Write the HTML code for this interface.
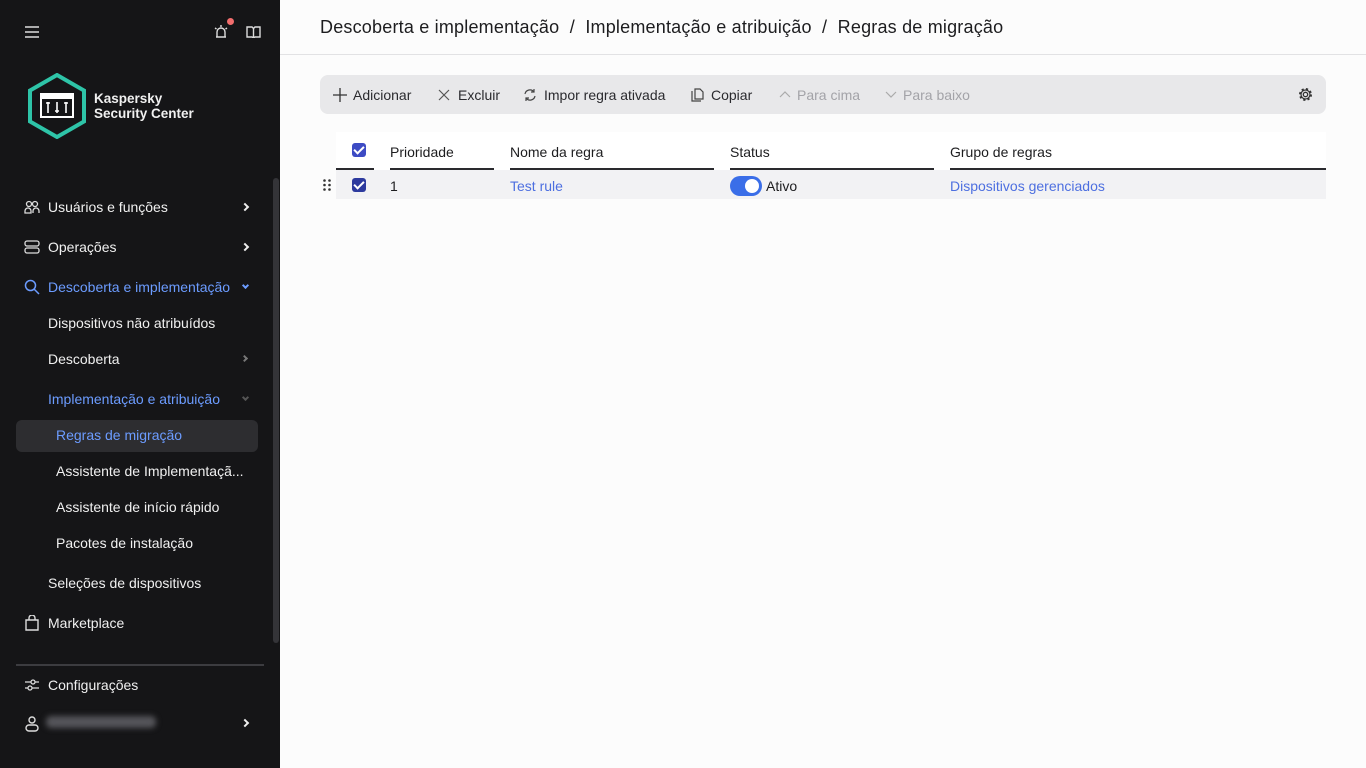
<!DOCTYPE html>
<html><head><meta charset="utf-8"><style>
*{box-sizing:border-box;margin:0;padding:0}
body{width:1366px;height:768px;overflow:hidden;font-family:"Liberation Sans",sans-serif;background:#fcfcfc;position:relative}
.sb{position:absolute;left:0;top:0;width:280px;height:768px;background:#151517;color:#f0f0f0}
.t{position:absolute;font-size:14px;white-space:nowrap}
.blue{color:#6c9cff}
.chev{position:absolute;width:6px;height:6px;border-right:2px solid #eee;border-bottom:2px solid #eee}
.main{position:absolute;left:280px;top:0;right:0;height:768px}
.h{position:absolute;top:17px;left:40px;font-size:18px;color:#1d1d1f;letter-spacing:0.2px}
.bar{position:absolute;left:40px;top:75px;width:1006px;height:39px;background:#e8e8ea;border-radius:8px}
.bt{position:absolute;top:12px;font-size:14px;color:#2a2a2e;white-space:nowrap}
.dis{color:#a3a3a8}
.th{position:absolute;top:144px;font-size:14px;color:#1d1d1f}
.ln{position:absolute;top:168px;height:2px;background:#2a2a2e}
.cb{position:absolute;width:14px;height:14px;background:#3d4bc4;border-radius:3px}
.cb:after{content:"";position:absolute;left:4px;top:1px;width:4px;height:8px;border-right:2px solid #fff;border-bottom:2px solid #fff;transform:rotate(45deg)}
</style></head><body>
<div class="sb">
 <svg style="position:absolute;left:25px;top:26px" width="14" height="12"><path d="M0 1h14M0 6h14M0 11h14" stroke="#ddd" stroke-width="1.6"/></svg>
 <svg style="position:absolute;left:213px;top:24px" width="16" height="16"><path d="M3 13h10M4 13V8a4 4 0 0 1 8 0v5M8 1v2M2 4l1.5 1M14 4l-1.5 1" stroke="#ddd" stroke-width="1.4" fill="none"/></svg>
 <div style="position:absolute;left:227px;top:18px;width:7px;height:7px;border-radius:50%;background:#f26d6d"></div>
 <svg style="position:absolute;left:246px;top:26px" width="15" height="12"><path d="M1 1h5l1.5 1.5L9 1h5v10H9l-1.5 1L6 11H1zM7.5 2.5V11" stroke="#ddd" stroke-width="1.4" fill="none"/></svg>
 <svg style="position:absolute;left:26px;top:73px" width="62" height="66"><path d="M31 2L58 17.5V48.5L31 64L4 48.5V17.5Z" fill="none" stroke="#2ec4a8" stroke-width="4"/><rect x="14" y="20" width="34" height="25" fill="#fff"/><rect x="16" y="26" width="30" height="17" fill="#151517"/><path d="M22 29v11M31 29v11M40 29v11M20 30h4M29 38h4M38 30h4" stroke="#fff" stroke-width="1.6"/></svg>
 <div class="t" style="left:94px;top:91px;font-weight:bold;font-size:13.5px;line-height:15px">Kaspersky<br>Security Center</div>
 <div style="position:absolute;left:273px;top:178px;width:6px;height:465px;background:#343438;border-radius:3px"></div>
 <svg style="position:absolute;left:24px;top:200px" width="16" height="14"><circle cx="5" cy="4" r="2.5" stroke="#ddd" fill="none" stroke-width="1.3"/><circle cx="11" cy="4" r="2.5" stroke="#ddd" fill="none" stroke-width="1.3"/><path d="M1 13v-2a3 3 0 0 1 6 0v2zM9 13v-2a3 3 0 0 1 6 0v2" stroke="#ddd" fill="none" stroke-width="1.3"/></svg>
 <div class="t" style="left:48px;top:199px">Usuários e funções</div><div class="chev" style="left:242px;top:204px;transform:rotate(-45deg)"></div>
 <svg style="position:absolute;left:24px;top:240px" width="16" height="14"><rect x="1" y="1" width="14" height="5" rx="2" stroke="#ddd" fill="none" stroke-width="1.3"/><rect x="1" y="8" width="14" height="5" rx="2" stroke="#ddd" fill="none" stroke-width="1.3"/></svg>
 <div class="t" style="left:48px;top:239px">Operações</div><div class="chev" style="left:242px;top:244px;transform:rotate(-45deg)"></div>
 <svg style="position:absolute;left:24px;top:279px" width="16" height="16"><circle cx="6.5" cy="6.5" r="5" stroke="#6c9cff" fill="none" stroke-width="1.5"/><path d="M10 10l5 5" stroke="#6c9cff" stroke-width="1.5"/></svg>
 <div class="t blue" style="left:48px;top:279px">Descoberta e implementação</div><div class="chev" style="left:243px;top:283px;transform:rotate(45deg);border-color:#6c9cff;width:5px;height:5px"></div>
 <div class="t" style="left:48px;top:315px">Dispositivos não atribuídos</div>
 <div class="t" style="left:48px;top:351px">Descoberta</div><div class="chev" style="left:242px;top:356px;transform:rotate(-45deg);border-color:#777;width:5px;height:5px"></div>
 <div class="t blue" style="left:48px;top:391px">Implementação e atribuição</div><div class="chev" style="left:243px;top:395px;transform:rotate(45deg);border-color:#555;width:5px;height:5px"></div>
 <div style="position:absolute;left:16px;top:420px;width:242px;height:32px;background:#2d2d30;border-radius:6px"></div>
 <div class="t blue" style="left:56px;top:427px">Regras de migração</div>
 <div class="t" style="left:56px;top:463px">Assistente de Implementaçã...</div>
 <div class="t" style="left:56px;top:499px">Assistente de início rápido</div>
 <div class="t" style="left:56px;top:535px">Pacotes de instalação</div>
 <div class="t" style="left:48px;top:575px">Seleções de dispositivos</div>
 <svg style="position:absolute;left:25px;top:615px" width="14" height="16"><path d="M1 5h12v10H1zM4 5V3a3 3 0 0 1 6 0v2" stroke="#ddd" fill="none" stroke-width="1.4"/></svg>
 <div class="t" style="left:48px;top:615px">Marketplace</div>
 <div style="position:absolute;left:16px;top:664px;width:248px;height:2px;background:#3c3c40"></div>
 <svg style="position:absolute;left:24px;top:678px" width="16" height="14"><path d="M1 4h14M1 10h14" stroke="#ddd" stroke-width="1.3"/><circle cx="9" cy="4" r="2" fill="#151517" stroke="#ddd" stroke-width="1.3"/><circle cx="6" cy="10" r="2" fill="#151517" stroke="#ddd" stroke-width="1.3"/></svg>
 <div class="t" style="left:48px;top:677px">Configurações</div>
 <svg style="position:absolute;left:25px;top:716px" width="14" height="16"><circle cx="7" cy="4" r="3" stroke="#ddd" fill="none" stroke-width="1.4"/><rect x="1" y="9" width="12" height="6" rx="3" stroke="#ddd" fill="none" stroke-width="1.4"/></svg>
 <div style="position:absolute;left:46px;top:716px;width:110px;height:12px;background:#55555a;border-radius:5px;filter:blur(3px)"></div>
 <div class="chev" style="left:242px;top:720px;transform:rotate(-45deg)"></div>
</div>
<div class="main">
 <div class="h">Descoberta e implementação &nbsp;/&nbsp; Implementação e atribuição &nbsp;/&nbsp; Regras de migração</div>
 <div style="position:absolute;left:0;right:0;top:54px;height:1px;background:#e2e2e4"></div>
 <div class="bar">
  <svg style="position:absolute;left:13px;top:13px" width="14" height="14"><path d="M7 0v14M0 7h14" stroke="#333" stroke-width="1.3"/></svg><div class="bt" style="left:33px">Adicionar</div>
  <svg style="position:absolute;left:118px;top:14px" width="12" height="12"><path d="M1 1l10 10M11 1L1 11" stroke="#555" stroke-width="1.2"/></svg><div class="bt" style="left:138px">Excluir</div>
  <svg style="position:absolute;left:203px;top:13px" width="14" height="14"><path d="M2 6a5 5 0 0 1 9-2M12 8a5 5 0 0 1-9 2M11 1v3H8M3 13v-3h3" stroke="#444" fill="none" stroke-width="1.2"/></svg><div class="bt" style="left:224px">Impor regra ativada</div>
  <svg style="position:absolute;left:371px;top:13px" width="13" height="14"><path d="M1 3v10h9M4 1h5l3 3v7H4z" stroke="#444" fill="none" stroke-width="1.2"/></svg><div class="bt" style="left:391px">Copiar</div>
  <svg style="position:absolute;left:459px;top:15px" width="12" height="8"><path d="M1 7l5-5 5 5" stroke="#aaa" fill="none" stroke-width="1.2"/></svg><div class="bt dis" style="left:477px">Para cima</div>
  <svg style="position:absolute;left:565px;top:16px" width="12" height="8"><path d="M1 1l5 5 5-5" stroke="#aaa" fill="none" stroke-width="1.2"/></svg><div class="bt dis" style="left:583px">Para baixo</div>
  <svg style="position:absolute;left:978px;top:12px" width="15" height="15"><circle cx="7.5" cy="7.5" r="2.2" fill="none" stroke="#333" stroke-width="1.3"/><circle cx="7.5" cy="7.5" r="5.3" fill="none" stroke="#333" stroke-width="2.4" stroke-dasharray="2.1 2.1"/><circle cx="7.5" cy="7.5" r="4.5" fill="none" stroke="#333" stroke-width="1.2"/></svg>
 </div>
 <div style="position:absolute;left:56px;top:132px;width:990px;height:38px;background:#fff"></div>
 <div style="position:absolute;left:56px;top:170px;width:990px;height:29px;background:#f2f2f4"></div>
 <div class="cb" style="left:72px;top:143px"></div>
 <div class="th" style="left:110px">Prioridade</div><div class="th" style="left:230px">Nome da regra</div><div class="th" style="left:450px">Status</div><div class="th" style="left:670px">Grupo de regras</div>
 <div class="ln" style="left:56px;width:38px"></div><div class="ln" style="left:110px;width:104px"></div><div class="ln" style="left:230px;width:204px"></div><div class="ln" style="left:450px;width:204px"></div><div class="ln" style="left:670px;width:376px"></div>
 <svg style="position:absolute;left:43px;top:179px" width="8" height="12"><g fill="#333"><circle cx="1.5" cy="1.5" r="1.3"/><circle cx="6.5" cy="1.5" r="1.3"/><circle cx="1.5" cy="6" r="1.3"/><circle cx="6.5" cy="6" r="1.3"/><circle cx="1.5" cy="10.5" r="1.3"/><circle cx="6.5" cy="10.5" r="1.3"/></g></svg>
 <div class="cb" style="left:72px;top:178px;background:#2d3a9e"></div>
 <div class="th" style="left:110px;top:178px">1</div>
 <div class="th" style="left:230px;top:178px;color:#4d6fe0">Test rule</div>
 <div style="position:absolute;left:450px;top:176px;width:32px;height:20px;border-radius:10px;background:#3a6ee8"><div style="position:absolute;right:3px;top:3px;width:14px;height:14px;border-radius:50%;background:#fff"></div></div>
 <div class="th" style="left:486px;top:178px">Ativo</div>
 <div class="th" style="left:670px;top:178px;color:#4d6fe0">Dispositivos gerenciados</div>
</div>
</body></html>
